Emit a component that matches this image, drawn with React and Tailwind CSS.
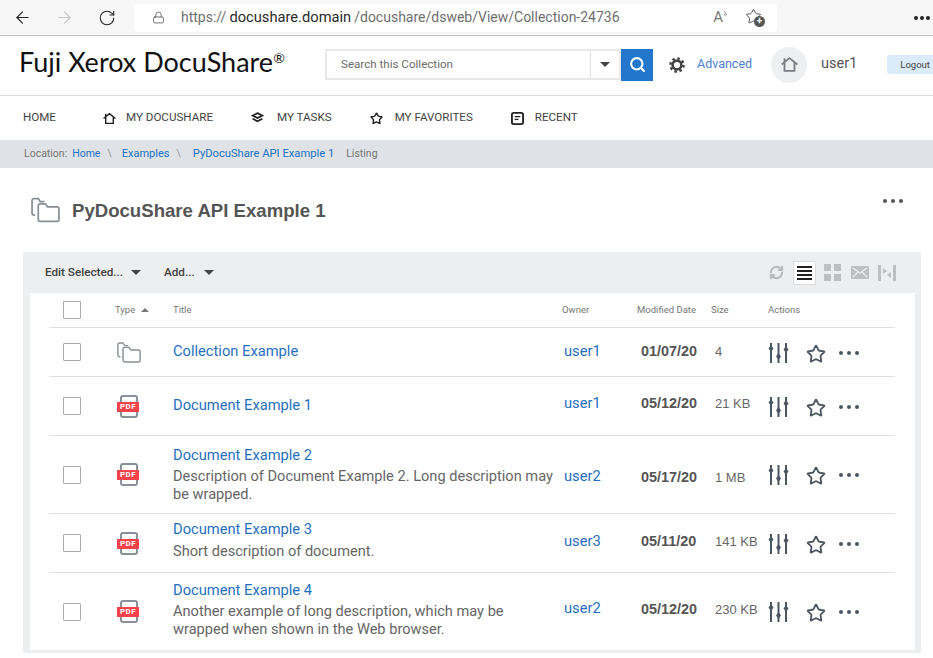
import { ArrowLeft, ArrowRight, RotateCw, Lock, Search, Star, RefreshCw } from 'lucide-react'

const rows = [
  { h: 'h-[49px]', icon: 'folder', title: 'Collection Example', owner: 'user1', date: '01/07/20', size: '4', shift: '-mt-[2px]', ownerShift: '-mt-[2px]', dateShift: '' },
  { h: 'h-[59px]', icon: 'pdf', title: 'Document Example 1', owner: 'user1', date: '05/12/20', size: '21 KB', shift: '-mt-[2px]', ownerShift: '-mt-[6px]', dateShift: '-mt-[4px]' },
  { h: 'h-[78px]', icon: 'pdf', title: 'Document Example 2', desc: 'Description of Document Example 2. Long description may be wrapped.', owner: 'user2', date: '05/17/20', size: '1 MB', shift: '', ownerShift: 'mt-[4px]', dateShift: 'mt-[6px]' },
  { h: 'h-[59px]', icon: 'pdf', title: 'Document Example 3', desc: 'Short description of document.', owner: 'user3', date: '05/11/20', size: '141 KB', shift: '-mt-[7px]', gap: 'mt-[4px]', ownerShift: '-mt-[4px]', dateShift: '-mt-[2px]' },
  { h: 'h-[78px]', icon: 'pdf', title: 'Document Example 4', desc: 'Another example of long description, which may be wrapped when shown in the Web browser.', owner: 'user2', date: '05/12/20', size: '230 KB', shift: '-mt-[4px]', ownerShift: '-mt-[6px]', dateShift: '-mt-[4px]' },
]

const gridCols = 'grid grid-cols-[66px_58px_389px_75px_74px_57px_127px] items-center'

function HomeIcon({ className }) {
  return (
    <svg viewBox="0 0 24 24" fill="none" stroke="currentColor" strokeWidth="2.6" className={className}>
      <path d="M1 12 12 3l11 9M5 9v12h14V9M5 3v5" />
    </svg>
  )
}

function FolderIcon({ className }) {
  return (
    <svg viewBox="0 0 28 24" fill="none" stroke="currentColor" strokeWidth="1.7" strokeLinejoin="round" className={className}>
      <path d="M4 17H3a2 2 0 0 1-2-2V3a2 2 0 0 1 2-2h4l2 3h4" />
      <path d="M7 8a2 2 0 0 1 2-2h5l2 3h9a2 2 0 0 1 2 2v10a2 2 0 0 1-2 2H9a2 2 0 0 1-2-2z" />
    </svg>
  )
}

function PdfIcon() {
  return (
    <div className="relative w-[22px] h-[23px]">
      <div className="absolute left-[3px] top-0 w-[18px] h-[23px] border-2 border-[#8a9097] rounded-[3px]" />
      <div className="absolute left-0 top-[7px] w-[22px] h-[10px] bg-[#f4424b] text-white text-[8px] leading-[10px] font-bold text-center tracking-[0.5px]">PDF</div>
    </div>
  )
}

function SlidersIcon() {
  return (
    <svg viewBox="0 0 21 20" className="w-[21px] h-[20px] text-[#4c5660]" fill="currentColor">
      <rect x="2" y="0" width="2" height="20" />
      <path d="M3 2 5.500 5.500 3 9 .5 5.500z" />
      <rect x="9.500" y="0" width="2" height="20" />
      <path d="M10.500 10 13 13.500 10.500 17 8 13.500z" />
      <rect x="17" y="0" width="2" height="20" />
      <path d="M18 3 20.500 6.500 18 10 15.500 6.500z" />
    </svg>
  )
}

function GearIcon() {
  return (
    <svg viewBox="0 0 16 16" className="ml-[16px] w-[16px] h-[16px] shrink-0 text-[#444]" fill="none" stroke="currentColor">
      <circle cx="8" cy="8" r="6.600" strokeWidth="2.400" strokeDasharray="2.600 2.600" />
      <circle cx="8" cy="8" r="4.400" strokeWidth="2.600" />
    </svg>
  )
}

function Dots({ className }) {
  return (
    <div className={`flex gap-[4px] ${className}`}>
      <span className="w-1 h-1 rounded-full bg-current" />
      <span className="w-1 h-1 rounded-full bg-current" />
      <span className="w-1 h-1 rounded-full bg-current" />
    </div>
  )
}

function Caret({ className }) {
  return <span className={`inline-block w-0 h-0 border-x-[5px] border-x-transparent border-t-[5px] border-t-[#444] ${className}`} />
}

function Checkbox() {
  return <div className="ml-[14px] w-[18px] h-[18px] border border-[#a9adb1] rounded-[1px] bg-white" />
}

function BrowserBar() {
  return (
    <div className="h-9 bg-[#f7f7f7] border-b border-[#c4c4c4] flex items-center pl-[13px]">
      <ArrowLeft className="w-[19px] h-[19px] text-[#222]" strokeWidth={1.4} />
      <ArrowRight className="w-[19px] h-[19px] ml-[23px] text-[#c4c4c4]" strokeWidth={1.4} />
      <RotateCw className="w-[18px] h-[18px] ml-[24px] text-[#222]" strokeWidth={1.4} />
      <div className="ml-[18px] w-[643px] h-[28px] shrink-0 bg-white rounded-[4px] flex items-center pl-[18px] text-[14px] whitespace-nowrap font-['Roboto',sans-serif] text-[#6f6f6f]">
        <Lock className="w-[13px] h-[15px] text-[#555]" strokeWidth={1.5} />
        <span className="ml-[16px]">https://</span>
        <span className="ml-[3px] text-[14.700px] text-[#2a2a2a]">docushare.domain</span>
        <span className="ml-[3px]">/docushare/dsweb/View/Collection-24736</span>
        <div className="ml-auto mr-[12px] flex items-center">
          <span className="text-[#777] text-[15px]">A</span>
          <svg viewBox="0 0 6 10" className="w-[5px] h-[9px] mb-[6px] text-[#777]" fill="none" stroke="currentColor">
            <path d="M1 1c2 1 3 3 3 5M1 4c1 .5 1.400 1.300 1.500 2.500" />
          </svg>
          <div className="relative ml-[17px] w-[20px] h-[19px]">
            <Star className="w-[17px] h-[17px] text-[#555]" strokeWidth={1.4} />
            <span className="absolute right-0 bottom-0 w-[11px] h-[11px] rounded-full bg-[#555] text-white text-[10px] leading-[10px] text-center font-bold">+</span>
          </div>
        </div>
      </div>
      <Dots className="ml-auto mr-[3px] text-[#222] !gap-[2px]" />
    </div>
  )
}

function Header() {
  return (
    <div className="h-[60px] border-b border-[#dcdcdc] flex items-center pb-[2px] overflow-hidden font-['Roboto',sans-serif]">
      <div className="ml-[19px] w-[306px] shrink-0 text-[27px] text-[#111] font-['Lato',sans-serif] whitespace-nowrap -mt-[4px]">
        Fuji Xerox DocuShare<span className="text-[14px] leading-none align-[9px]">®</span>
      </div>
      <div className="w-[296px] h-[31px] shrink-0 border-2 border-[#e8e8e8] flex items-center pl-[14px] text-[11.600px] text-[#6c6c6c]">
        Search this Collection
        <div className="ml-auto w-[29px] h-full border-l border-[#e0e0e0] flex items-center justify-center">
          <Caret />
        </div>
      </div>
      <div className="w-[32px] h-[32px] shrink-0 bg-[#2277cc] flex items-center justify-center">
        <Search className="w-[17px] h-[17px] text-white" strokeWidth={3} />
      </div>
      <GearIcon />
      <a className="ml-[12px] shrink-0 text-[12.500px] text-[#4a80d0]">Advanced</a>
      <div className="ml-[19px] w-9 h-9 shrink-0 rounded-full bg-[#eeeff0] flex items-center justify-center">
        <HomeIcon className="w-[17px] h-[17px] text-[#7a7f85]" />
      </div>
      <span className="ml-[14px] shrink-0 text-[14.500px] text-[#555] -mt-[2px]">user1</span>
      <div className="ml-[30px] w-[60px] h-[19px] shrink-0 bg-[#dcebfa] rounded-[3px] text-[9.500px] leading-[19px] text-[#444] pl-[13px]">Logout</div>
    </div>
  )
}

function Nav() {
  return (
    <div className="h-[44px] flex items-center text-[11.600px] text-[#444] font-['Roboto',sans-serif]">
      <span className="ml-[23px]">HOME</span>
      <HomeIcon className="ml-[47px] w-[13px] h-[13px] text-[#222]" />
      <span className="ml-[10px]">MY DOCUSHARE</span>
      <svg viewBox="0 0 16 14" className="ml-[38px] w-[13px] h-[12px] text-[#222]" fill="none" stroke="currentColor" strokeWidth="2.200">
        <path d="M8 1 14 4 8 7 2 4zM2 8l6 3 6-3" />
      </svg>
      <span className="ml-[13px]">MY TASKS</span>
      <Star className="ml-[38px] w-[13px] h-[13px] text-[#222]" strokeWidth={2.6} />
      <span className="ml-[12px]">MY FAVORITES</span>
      <svg viewBox="0 0 14 14" className="ml-[38px] w-[13px] h-[13px] text-[#222]" fill="none" stroke="currentColor" strokeWidth="2">
        <rect x="1" y="1" width="12" height="12" rx="2" />
        <path d="M4 5h6M4 8h4" strokeWidth="1.400" />
      </svg>
      <span className="ml-[11px]">RECENT</span>
    </div>
  )
}

function Breadcrumb() {
  return (
    <div className="h-[28px] bg-[#dfe2e6] flex items-center pl-[24px] text-[10.500px] text-[#777] font-['Roboto',sans-serif]">
      <span>Location:</span>
      <a className="ml-[5px] text-[#2072c4]">Home</a>
      <span className="ml-[7px] text-[#999]">\</span>
      <a className="ml-[10px] text-[11px] text-[#2072c4]">Examples</a>
      <span className="ml-[7px] text-[#999]">\</span>
      <a className="ml-[12px] text-[11.200px] text-[#2072c4]">PyDocuShare API Example 1</a>
      <span className="ml-[12px]">Listing</span>
    </div>
  )
}

function Toolbar() {
  return (
    <div className="h-[41px] flex items-center text-[11.700px] font-medium text-[#444] font-['Roboto',sans-serif]">
      <span className="ml-[22px]">Edit Selected...</span>
      <Caret className="ml-[8px]" />
      <span className="ml-[23px]">Add...</span>
      <Caret className="ml-[9px]" />
      <div className="ml-auto mr-[25px] flex items-center">
        <RefreshCw className="w-[15px] h-[15px] text-[#b9bcbf]" strokeWidth={3.4} />
        <div className="ml-[9px] w-[23px] h-[24px] bg-white border border-[#dcdcdc] flex flex-col justify-center gap-[2px] px-[3px]">
          <span className="h-[2px] bg-[#222]" />
          <span className="h-[2px] bg-[#222]" />
          <span className="h-[2px] bg-[#222]" />
          <span className="h-[2px] bg-[#222]" />
        </div>
        <div className="ml-[8px] grid grid-cols-2 gap-[3px]">
          <span className="w-[7px] h-[7px] bg-[#bdbfc2]" />
          <span className="w-[7px] h-[7px] bg-[#bdbfc2]" />
          <span className="w-[7px] h-[7px] bg-[#bdbfc2]" />
          <span className="w-[7px] h-[7px] bg-[#bdbfc2]" />
        </div>
        <svg viewBox="0 0 18 13" className="ml-[10px] w-[18px] h-[13px]">
          <rect width="18" height="13" rx="1" fill="#bdbfc2" />
          <path d="M2 2l7 5 7-5M2 11l5-5M16 11l-5-5" fill="none" stroke="#edeef0" strokeWidth="1.300" />
        </svg>
        <svg viewBox="0 0 18 18" className="ml-[9px] w-[18px] h-[18px] text-[#bdbfc2]" fill="currentColor">
          <path d="M0 1h3v16H0zM15 1h3v16h-3zM5 4l4 3-4 3zM13 8v6L9 11z" />
        </svg>
      </div>
    </div>
  )
}

function Row({ row }) {
  return (
    <div className={`${gridCols} ${row.h} border-t border-[#dedede]`}>
      <Checkbox />
      <div className="pl-[2px]">
        {row.icon === 'folder' ? <FolderIcon className="w-[24px] h-[21px] text-[#8a9097]" /> : <PdfIcon />}
      </div>
      <div className={`leading-[18px] pr-1 ${row.shift}`}>
        <a className="text-[14.700px] text-[#1f6fc0]">{row.title}</a>
        {row.desc && <div className={`${row.gap || 'mt-[3px]'} text-[14.600px] text-[#666]`}>{row.desc}</div>}
      </div>
      <a className={`pl-[2px] text-[14.700px] text-[#1f6fc0] ${row.ownerShift}`}>{row.owner}</a>
      <span className={`pl-[4px] text-[14.400px] font-bold text-[#555] font-['Liberation_Sans',sans-serif] ${row.dateShift}`}>{row.date}</span>
      <span className={`pl-[4px] text-[13px] text-[#666] whitespace-nowrap font-['Liberation_Sans',sans-serif] ${row.dateShift}`}>{row.size}</span>
      <div className="flex items-center whitespace-nowrap mt-[1px]">
        <SlidersIcon />
        <Star className="ml-[17px] mt-[2px] w-[20px] h-[20px] text-[#4c5660]" strokeWidth={2.2} />
        <Dots className="ml-[13px] text-[#4c5660]" />
      </div>
    </div>
  )
}

export default function App() {
  return (
    <div className="w-[933px] h-[658px] overflow-hidden bg-white font-['Roboto',sans-serif]">
      <BrowserBar />
      <Header />
      <Nav />
      <Breadcrumb />
      <div className="h-[84px] flex items-center pb-[1px] pl-[31px] pr-[30px]">
        <FolderIcon className="w-[29px] h-[26px] text-[#8a9097]" />
        <h1 className="ml-[12px] mt-[3px] text-[18.600px] font-bold text-[#555] font-['Liberation_Sans',sans-serif]">PyDocuShare API Example 1</h1>
        <Dots className="ml-auto text-[#555] -mt-[18px]" />
      </div>
      <div className="ml-[23px] w-[898px] h-[401px] bg-[#edeef0]">
        <Toolbar />
        <div className="ml-[7px] w-[885px] h-[357px] bg-white pl-[19px]">
          <div className={`${gridCols} h-[34px] text-[9.500px] text-[#777]`}>
            <Checkbox />
            <div className="flex items-center">
              Type
              <span className="ml-[6px] w-0 h-0 border-x-[4px] border-x-transparent border-b-[4px] border-b-[#777]" />
            </div>
            <span>Title</span>
            <span>Owner</span>
            <span>Modified Date</span>
            <span>Size</span>
            <span>Actions</span>
          </div>
          <div className="w-[846px] overflow-hidden">
            {rows.map((row) => (
              <Row key={row.title} row={row} />
            ))}
          </div>
        </div>
      </div>
    </div>
  )
}
